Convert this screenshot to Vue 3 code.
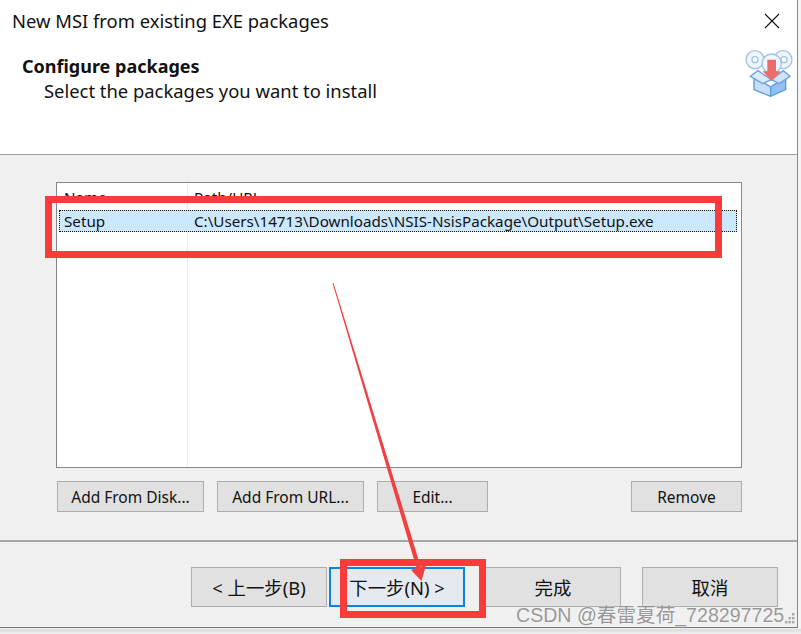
<script setup>
const columns = [
  { name: 'Setup', path: 'C:\\Users\\14713\\Downloads\\NSIS-NsisPackage\\Output\\Setup.exe' }
]
</script>

<template>
  <div class="page">
    <div class="window">
      <header class="head">
        <div class="title-row">
          <span class="title">New MSI from existing EXE packages</span>
          <svg class="close" viewBox="0 0 16 16" width="16" height="16">
            <path d="M1 1 15 15M15 1 1 15" stroke="#111" stroke-width="1.1" fill="none" />
          </svg>
        </div>
        <div class="head-main">
          <div class="head-text">
            <h1>Configure packages</h1>
            <p>Select the packages you want to install</p>
          </div>
          <svg class="pkg" viewBox="130 145 150 150" width="50" height="50">
            <g fill="#eef5fd" stroke="#9fc3e8" stroke-width="4">
              <circle cx="163" cy="180" r="27" />
              <circle cx="247" cy="180" r="27" />
              <circle cx="213" cy="192" r="29" />
            </g>
            <g fill="#fff" stroke="#9fc3e8" stroke-width="4">
              <circle cx="163" cy="180" r="9" />
              <circle cx="250" cy="180" r="9" />
            </g>
            <path d="M160 232 210 262V290L160 270Z" fill="#c6def9" stroke="#5c9ad8" stroke-width="4" />
            <path d="M210 262 255 232V270L210 290Z" fill="#92c0f5" stroke="#5c9ad8" stroke-width="4" />
            <path d="M149 230 172 213 212 240 186 252Z" fill="#dcebfb" stroke="#6ea5de" stroke-width="4" />
            <path d="M268 230 248 213 212 240 236 252Z" fill="#cfe3fa" stroke="#6ea5de" stroke-width="4" />
            <path d="M200 180H226V215H241L213 244 186 215H200Z" fill="#ee6b6b" />
          </svg>
        </div>
      </header>

      <main class="body">
        <section class="list">
          <div class="list-head">
            <span class="col-name">Name</span>
            <span class="col-path">Path/URL</span>
          </div>
          <div v-for="row in columns" :key="row.name" class="row">
            <span class="col-name">{{ row.name }}</span>
            <span class="col-path">{{ row.path }}</span>
          </div>
        </section>
        <div class="actions">
          <button class="btn wide">Add From Disk...</button>
          <button class="btn wide">Add From URL...</button>
          <button class="btn mid">Edit...</button>
          <button class="btn mid push">Remove</button>
        </div>
      </main>

      <footer class="foot">
        <button class="btn nav first">&lt; 上一步(B)</button>
        <button class="btn nav next">下一步(N) &gt;</button>
        <button class="btn nav finish">完成</button>
        <button class="btn nav cancel">取消</button>
      </footer>
    </div>

    <div class="mark mark-row"></div>
    <div class="mark mark-next"></div>
    <svg class="arrow" viewBox="0 0 801 634" width="801" height="634">
      <path d="M332.5 283 405.5 531 416.5 568 411 570 421.5 581 426 565 420.5 566.5 409.5 530 333.5 283Z" fill="#f23f3f" />
    </svg>
    <div class="watermark">CSDN @春雷夏荷_728297725</div>
    <svg class="wm-dots" viewBox="0 0 10 12" width="10" height="12">
      <g fill="#a8a8a8">
        <rect x="7" y="0" width="2.4" height="2.4" />
        <rect x="3.5" y="4" width="2.4" height="2.4" />
        <rect x="7" y="4" width="2.4" height="2.4" />
        <rect x="0" y="8" width="2.4" height="2.4" />
        <rect x="3.5" y="8" width="2.4" height="2.4" />
        <rect x="7" y="8" width="2.4" height="2.4" />
      </g>
    </svg>
  </div>
</template>

<style>
html, body { margin: 0; background: #f4f4f4; }
</style>

<style scoped>
.page {
  position: relative;
  width: 801px;
  height: 634px;
  overflow: hidden;
  background: linear-gradient(#f4f4f4 628px, #dcdcdc 630px, #f4f4f4 634px);
  font-family: "Noto Sans", "Noto Sans CJK SC", sans-serif;
  color: #111;
}
.window {
  width: 797px;
  height: 627px;
  display: flex;
  flex-direction: column;
  background: #f0f0f0;
  border-right: 1px solid #888;
  border-bottom: 1px solid #777;
}
.head {
  height: 155px;
  box-sizing: border-box;
  background: #fff;
  border-bottom: 1px solid #a0a0a0;
  display: flex;
  flex-direction: column;
}
.title-row {
  display: flex;
  justify-content: space-between;
  align-items: center;
  height: 40px;
  padding: 0 17px 0 12px;
}
.title { font-size: 18.4px; }
.close { display: block; margin-top: 2px; }
.head-main {
  display: flex;
  justify-content: space-between;
  padding: 0 3px 0 22px;
}
.head-text h1 {
  margin: 14px 0 0;
  font-size: 18px;
  line-height: 24px;
  font-weight: 700;
}
.head-text p {
  margin: 1px 0 0 22px;
  font-size: 18.4px;
  line-height: 24px;
}
.pkg { display: block; margin-top: 8px; }
.body {
  height: 387px;
  box-sizing: border-box;
  padding: 27px 55px 0 56px;
  border-bottom: 2px solid #a6a6a6;
}
.list {
  height: 286px;
  box-sizing: border-box;
  border: 1px solid #828790;
  background: #fff;
  background-image: linear-gradient(#e8edf4, #e8edf4);
  background-size: 1px 100%;
  background-position: 130px 0;
  background-repeat: no-repeat;
  padding-top: 1px;
  font-size: 15.2px;
}
.list-head, .row {
  display: flex;
  align-items: center;
  padding-left: 7px;
}
.list-head { height: 26px; }
.row {
  height: 22px;
  margin: 0 4px 0 2px;
  padding-left: 5px;
  box-sizing: border-box;
  background: #cce8ff;
  outline: 1px dotted #111;
  outline-offset: -1px;
}
.col-name { width: 130px; flex: none; }
.col-path { white-space: nowrap; }
.actions {
  display: flex;
  gap: 13px;
  margin: 13px 0 0 1px;
}
.btn {
  box-sizing: border-box;
  height: 31px;
  padding: 0;
  background: #e1e1e1;
  border: 1px solid #adadad;
  font: inherit;
  font-size: 15.5px;
  color: #111;
}
.wide { width: 147px; }
.mid { width: 111px; }
.push { margin-left: auto; }
.foot {
  flex: 1;
  display: flex;
  align-items: flex-start;
  padding: 25px 0 0 191px;
}
.nav { width: 136px; height: 40px; font-size: 18.4px; }
.next {
  margin-left: 2px;
  background: #e5eaf0;
  border: 2px solid #0a84e0;
}
.finish { margin-left: 20px; }
.cancel { margin-left: 21px; }
.mark {
  position: absolute;
  box-sizing: border-box;
  border: 7px solid #f93b3b;
}
.mark-row { left: 45px; top: 196px; width: 677px; height: 62px; }
.mark-next { left: 340px; top: 559px; width: 146px; height: 59px; }
.arrow { position: absolute; left: 0; top: 0; pointer-events: none; }
.watermark {
  position: absolute;
  left: 516px;
  top: 603px;
  font-family: "Liberation Sans", "Noto Sans CJK SC", sans-serif;
  font-size: 19.6px;
  line-height: 24px;
  white-space: nowrap;
  color: rgba(120, 120, 120, 0.75);
  text-shadow: 0 0 2px rgba(255, 255, 255, 0.7);
}
.wm-dots { position: absolute; left: 785px; top: 613px; }
</style>
